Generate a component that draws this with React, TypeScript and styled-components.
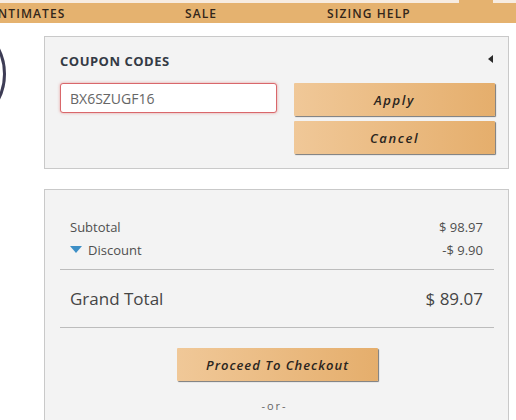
import React from 'react';
import styled, { createGlobalStyle } from 'styled-components';

const GlobalStyle = createGlobalStyle`
	body {
		margin: 0;
		background: #ffffff;
		font-family: 'Open Sans', 'Liberation Sans', sans-serif;
	}
`;

const navItems = ['INTIMATES', 'SALE', 'SIZING HELP'];

const App: React.FC = (): JSX.Element => {
	return (
		<Page>
			<GlobalStyle />
			<Header>
				<TopStrip>
					<TopTab />
				</TopStrip>
				<NavBar>
					{navItems.map((item) => (
						<NavItem key={item}>{item}</NavItem>
					))}
				</NavBar>
			</Header>
			<Main>
				<LeftRail>
					<ProfileRing />
				</LeftRail>
				<Content>
					<CouponPanel>
						<PanelHeader>
							<PanelTitle>COUPON CODES</PanelTitle>
							<Caret />
						</PanelHeader>
						<CouponRow>
							<CodeInput defaultValue="BX6SZUGF16" />
							<ButtonStack>
								<GoldButton>Apply</GoldButton>
								<GoldButton>Cancel</GoldButton>
							</ButtonStack>
						</CouponRow>
					</CouponPanel>
					<SummaryPanel>
						<LineRow>
							<span>Subtotal</span>
							<span>$ 98.97</span>
						</LineRow>
						<LineRow>
							<DiscountLabel>
								<DownArrow />
								Discount
							</DiscountLabel>
							<span>-$ 9.90</span>
						</LineRow>
						<Divider />
						<TotalRow>
							<span>Grand Total</span>
							<span>$ 89.07</span>
						</TotalRow>
						<Divider />
						<CheckoutWrap>
							<GoldButton $wide>Proceed To Checkout</GoldButton>
						</CheckoutWrap>
						<OrText>-or-</OrText>
					</SummaryPanel>
				</Content>
			</Main>
		</Page>
	);
};

const Page = styled.div`
	width: 516px;
	height: 420px;
	overflow: hidden;
	display: flex;
	flex-direction: column;
`;

const Header = styled.div`
	display: flex;
	flex-direction: column;
`;

const TopStrip = styled.div`
	height: 3px;
	background: #f7ece1;
	display: flex;
	justify-content: flex-end;
	padding-right: 23px;
`;

const TopTab = styled.div`
	width: 34px;
	background: #e5b26f;
`;

const NavBar = styled.nav`
	height: 20px;
	background: #e5b26f;
	display: flex;
	align-items: center;
	overflow: hidden;

	& > :first-child {
		margin-left: -7px;
		width: 192px;
	}
	& > :nth-child(2) {
		width: 142px;
	}
`;

const NavItem = styled.span`
	flex: none;
	font-size: 12px;
	font-weight: 600;
	letter-spacing: 1.1px;
	color: #33261a;
	line-height: 20px;
	padding-top: 2px;
`;

const Main = styled.div`
	display: flex;
	flex: 1;
	min-height: 0;
`;

const LeftRail = styled.div`
	width: 44px;
	flex: none;
	overflow: hidden;
`;

const ProfileRing = styled.div`
	width: 106px;
	height: 106px;
	border-radius: 50%;
	border: 3px solid #3d3c55;
	margin-left: -106px;
	margin-top: -5px;
`;

const Content = styled.div`
	width: 465px;
	padding-top: 13px;
	display: flex;
	flex-direction: column;
	gap: 20px;
`;

const Panel = styled.div`
	background: #f3f3f3;
	border: 1px solid #c9c9c9;
`;

const CouponPanel = styled(Panel)`
	height: 134px;
	box-sizing: border-box;
	padding: 14px 13px 14px 15px;
	display: flex;
	flex-direction: column;
	gap: 12px;
`;

const PanelHeader = styled.div`
	display: flex;
	align-items: center;
	justify-content: space-between;
	height: 20px;
	padding-right: 2px;
`;

const PanelTitle = styled.h3`
	margin: 0;
	font-size: 13px;
	font-weight: 700;
	color: #343a45;
	letter-spacing: 0.5px;
`;

const Caret = styled.span`
	width: 0;
	height: 0;
	border-top: 4px solid transparent;
	border-bottom: 4px solid transparent;
	border-right: 5px solid #2a2a2a;
	margin-top: -4px;
`;

const CouponRow = styled.div`
	display: grid;
	grid-template-columns: 217px 201px;
	column-gap: 17px;
	align-items: start;
`;

const CodeInput = styled.input`
	height: 30px;
	box-sizing: border-box;
	border: 1px solid #d9676b;
	border-radius: 3px;
	box-shadow: 0 0 3px rgba(217, 83, 79, 0.55);
	background: #ffffff;
	padding: 0 9px;
	font-family: 'Open Sans', 'Liberation Sans', sans-serif;
	font-size: 14px;
	color: #666666;
	outline: none;
`;

const ButtonStack = styled.div`
	display: flex;
	flex-direction: column;
	gap: 5px;
`;

const GoldButton = styled.button<{ $wide?: boolean }>`
	width: ${(p) => (p.$wide ? '201px' : '100%')};
	height: 33px;
	border: none;
	border-radius: 1px;
	background: linear-gradient(to right, #f0c898, #e5ae6c);
	box-shadow: 1px 1px 1px rgba(0, 0, 0, 0.5);
	font-family: 'Open Sans', 'Liberation Sans', sans-serif;
	font-style: italic;
	font-weight: 600;
	font-size: 13px;
	letter-spacing: ${(p) => (p.$wide ? '1px' : '1.6px')};
	color: #2a2520;
	cursor: pointer;
	padding: 0;
`;

const SummaryPanel = styled(Panel)`
	padding: 25px 14px 20px 15px;
	display: flex;
	flex-direction: column;
`;

const LineRow = styled.div`
	display: flex;
	justify-content: space-between;
	align-items: center;
	height: 23px;
	padding: 0 11px 0 10px;
	font-size: 13px;
	color: #4f4f4f;
`;

const DiscountLabel = styled.span`
	display: flex;
	align-items: center;
	gap: 6px;
`;

const DownArrow = styled.span`
	width: 0;
	height: 0;
	border-left: 6px solid transparent;
	border-right: 6px solid transparent;
	border-top: 7px solid #3d8fc6;
`;

const Divider = styled.hr`
	margin: 0;
	border: none;
	border-top: 1px solid #bcbcbc;
	&:first-of-type {
		margin-top: 8px;
	}
`;

const TotalRow = styled(LineRow)`
	height: 57px;
	font-size: 17px;
	color: #454545;
`;

const CheckoutWrap = styled.div`
	display: flex;
	justify-content: center;
	padding-top: 20px;
	padding-left: 1px;
`;

const OrText = styled.div`
	text-align: center;
	margin-top: 16px;
	padding-right: 5px;
	font-size: 11px;
	letter-spacing: 2px;
	line-height: 18px;
	color: #666666;
`;

export default App;
